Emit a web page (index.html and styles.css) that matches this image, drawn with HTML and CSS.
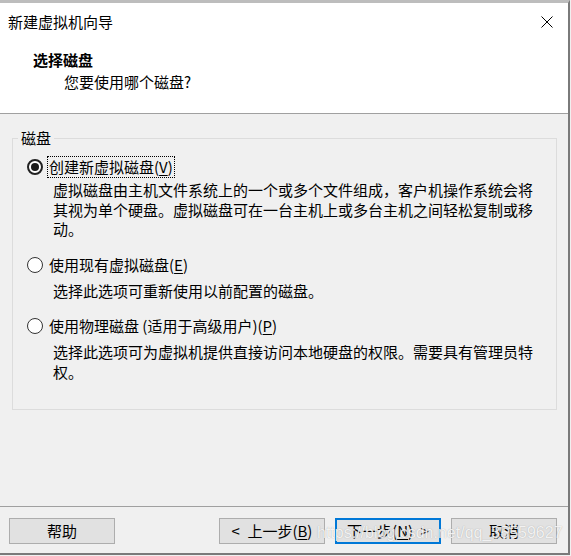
FILE: index.html
```html
<!DOCTYPE html>
<html lang="zh-CN">
<head>
<meta charset="utf-8">
<title>新建虚拟机向导</title>
<link rel="stylesheet" href="styles.css">
</head>
<body>
<div class="window">
  <div class="titlebar">
    <span class="title">新建虚拟机向导</span>
    <svg class="close" width="12" height="12" viewBox="0 0 12 12" aria-hidden="true">
      <path d="M0.5 0.5L11.5 11.5M11.5 0.5L0.5 11.5" stroke="#000" stroke-width="1" fill="none"/>
    </svg>
  </div>
  <div class="header">
    <div class="h-title">选择磁盘</div>
    <div class="h-sub">您要使用哪个磁盘?</div>
  </div>
  <div class="content">
    <div class="group">
      <span class="legend">磁盘</span>
      <div class="opt first">
        <div class="row"><span class="radio checked"></span><span class="label focus">创建新虚拟磁盘(<u>V</u>)</span></div>
        <div class="desc">虚拟磁盘由主机文件系统上的一个或多个文件组成，客户机操作系统会将<br>其视为单个硬盘。虚拟磁盘可在一台主机上或多台主机之间轻松复制或移<br>动。</div>
      </div>
      <div class="opt">
        <div class="row"><span class="radio"></span><span class="label">使用现有虚拟磁盘(<u>E</u>)</span></div>
        <div class="desc">选择此选项可重新使用以前配置的磁盘。</div>
      </div>
      <div class="opt">
        <div class="row"><span class="radio"></span><span class="label">使用物理磁盘 (适用于高级用户)(<u>P</u>)</span></div>
        <div class="desc">选择此选项可为虚拟机提供直接访问本地硬盘的权限。需要具有管理员特<br>权。</div>
      </div>
    </div>
  </div>
  <div class="footer">
    <button class="btn">帮助</button>
    <div class="nav">
      <button class="btn">&lt;&ensp;上一步(<u>B</u>)</button>
      <button class="btn primary">下一步(<u>N</u>)&ensp;&gt;</button>
      <button class="btn">取消</button>
    </div>
    <span class="watermark">https://blog.csdn.net/qq_35559627</span>
  </div>
</div>
</body>
</html>
```

FILE: styles.css
```css
* { box-sizing: border-box; }
html, body { margin: 0; padding: 0; }
body {
  width: 571px;
  height: 556px;
  overflow: hidden;
  background: #f0f0f0;
  font-family: "Noto Sans CJK SC", "Noto Sans", sans-serif;
  font-size: 15px;
  color: #000;
}
.window {
  width: 570px;
  height: 555px;
  border-top: 3px solid #bdbdbd;
  border-right: 2px solid #7a7a7a;
  border-bottom: 2px solid #7a7a7a;
  background: #f0f0f0;
  display: flex;
  flex-direction: column;
}
.titlebar {
  height: 38px;
  flex: none;
  background: #fff;
  display: flex;
  align-items: center;
  justify-content: space-between;
  padding: 0 15px 0 8px;
  line-height: 20px;
}
.close { display: block; }
.header {
  height: 73px;
  flex: none;
  background: #fff;
  border-bottom: 1px solid #a0a0a0;
  padding-top: 9px;
  line-height: 20px;
}
.h-title { font-weight: 700; padding-left: 33px; }
.h-sub { margin-top: 2px; padding-left: 64px; }
.content {
  height: 392px;
  flex: none;
  padding: 24px 11px 0 12px;
}
.group {
  position: relative;
  height: 272px;
  border: 1px solid #dcdcdc;
  padding: 18px 0 0 14px;
}
.legend {
  position: absolute;
  top: -11px;
  left: 5px;
  padding: 0 3px;
  background: #f0f0f0;
  line-height: 20px;
}
.opt + .opt { margin-top: 16px; }
.row {
  display: flex;
  align-items: center;
  height: 20px;
  line-height: 20px;
}
.radio {
  flex: none;
  position: relative;
  width: 16px;
  height: 16px;
  border: 1px solid #333;
  border-radius: 50%;
  background: #fff;
}
.radio.checked { border-width: 2px; border-color: #222; }
.radio.checked::after {
  content: "";
  position: absolute;
  left: 2px;
  top: 2px;
  width: 8px;
  height: 8px;
  border-radius: 50%;
  background: #1a1a1a;
}
.label {
  margin-left: 5px;
  padding: 0 1px;
  white-space: nowrap;
}
.label u, .btn u { text-underline-offset: 2px; }
.label.focus { outline: 1px dotted #000; outline-offset: 0; }
.desc {
  margin-left: 26px;
  margin-top: 6px;
  line-height: 19.5px;
  white-space: nowrap;
}
.opt.first .desc { margin-top: 3px; }
.footer {
  position: relative;
  height: 47px;
  flex: none;
  border-top: 1px solid #a0a0a0;
  padding: 11px 11px 0 9px;
  display: flex;
  align-items: flex-start;
}
.nav {
  margin-left: auto;
  display: flex;
  gap: 10px;
}
.btn {
  width: 106px;
  height: 26px;
  padding: 0;
  border: 1px solid #adadad;
  border-radius: 0;
  background: #e1e1e1;
  font-family: inherit;
  font-size: 15px;
  line-height: 22px;
  color: #000;
  text-align: center;
}
.btn.primary { border: 2px solid #0078d7; }
.watermark {
  position: absolute;
  left: 317px;
  top: 17px;
  font-family: "Liberation Sans", Arial, sans-serif;
  font-size: 16px;
  color: rgba(255, 255, 255, 0.85);
  text-shadow: 0 0 1px rgba(110, 110, 110, 0.55);
  white-space: nowrap;
  pointer-events: none;
}
```
